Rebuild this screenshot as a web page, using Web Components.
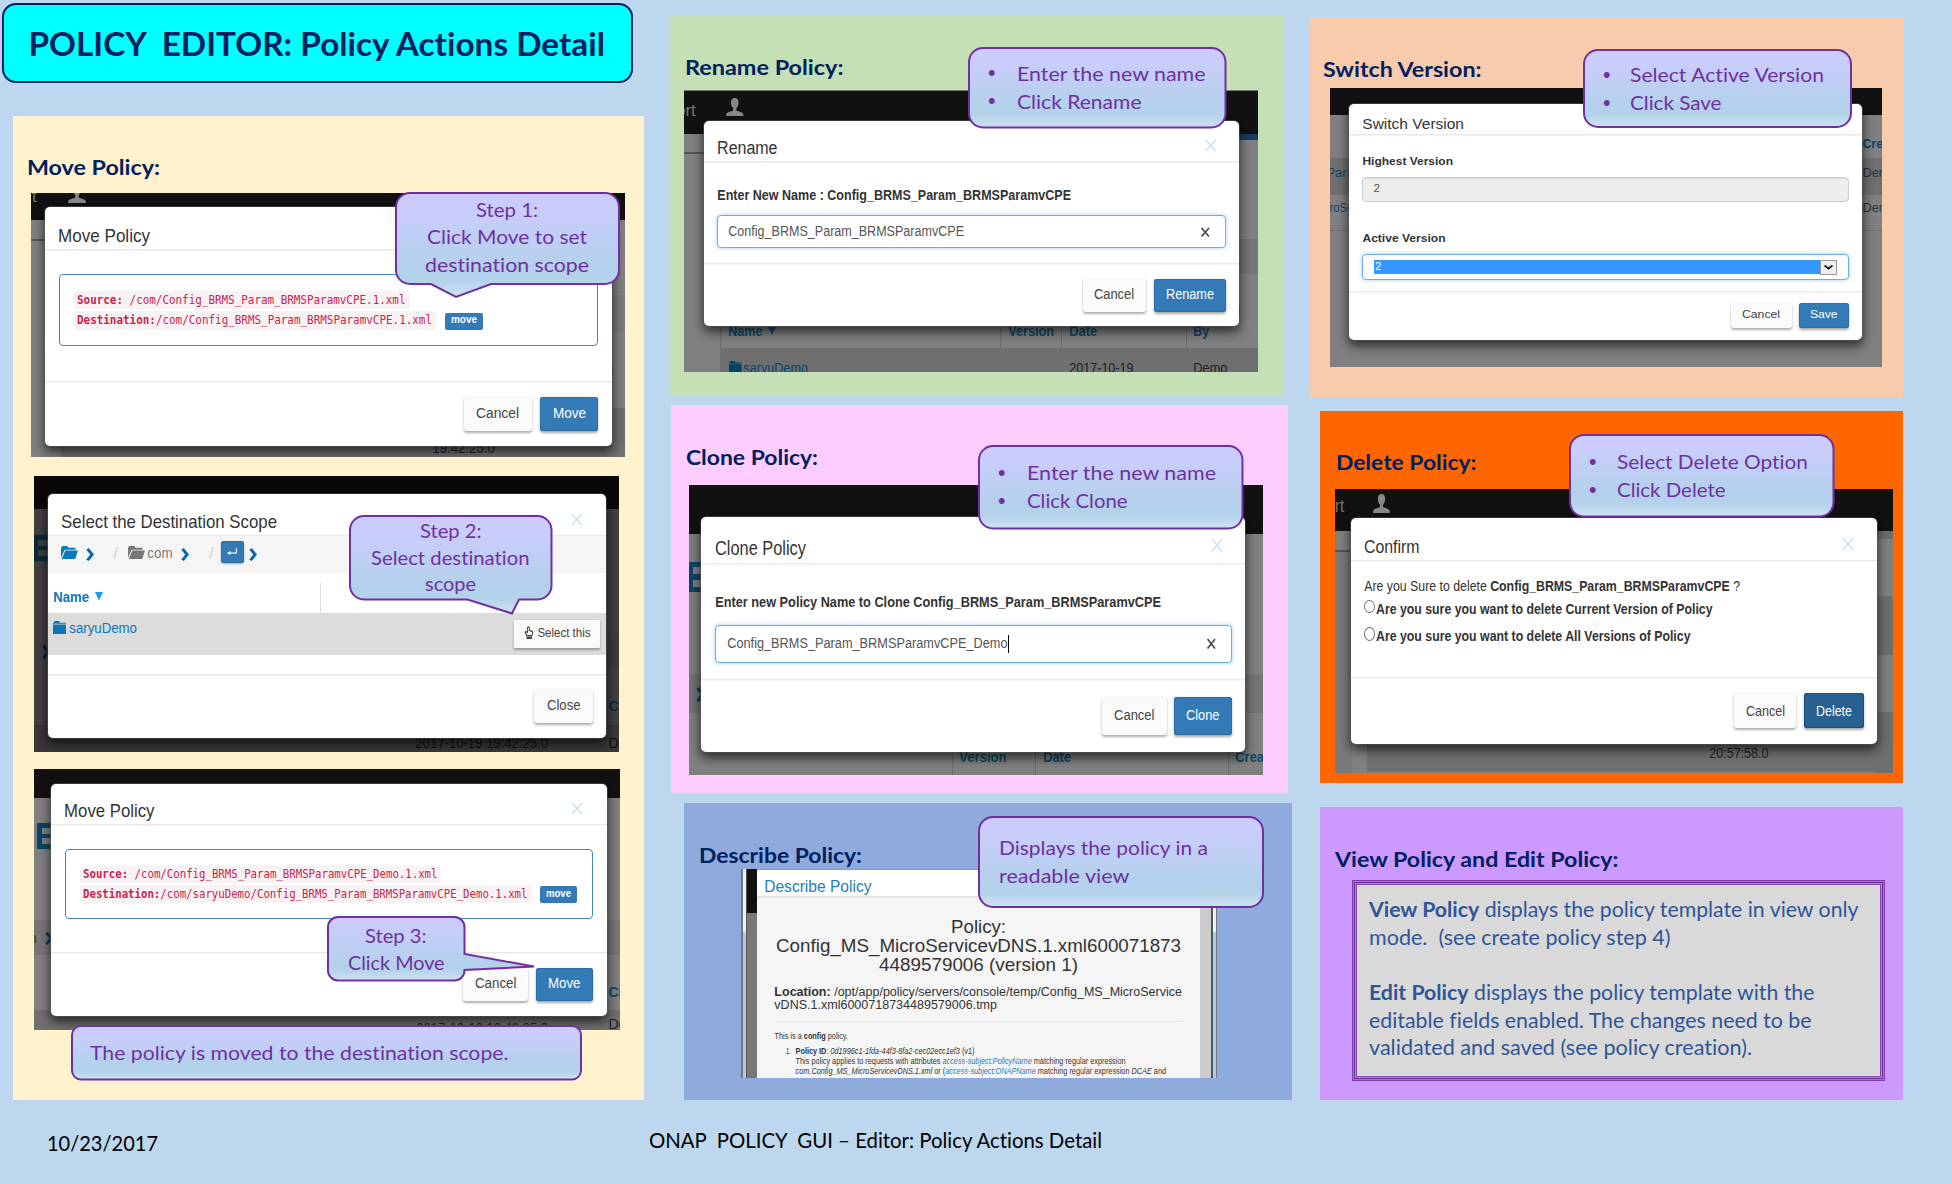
<!DOCTYPE html>
<html lang="en">
<head>
<meta charset="utf-8">
<title>Policy Editor: Policy Actions Detail</title>
<style>
html,body{margin:0;padding:0;background:#bdd7ee;overflow:hidden}
body{width:1952px;height:1184px}
</style>
</head>
<body>
<policy-slide>
  <slide-column style="width:657px">
    <slide-title><fit-text x="26" dy="52" w="575" s="32.5" f="deck"><b>POLICY&nbsp; EDITOR: Policy Actions Detail</b></fit-text></slide-title>
    <policy-panel style="margin:33px 0 0 13px;width:631px;height:984px;--fill:#fff2cc">
      <fit-text slot="heading" x="15" dy="60" w="132" s="21.3" f="deck"><b>Move Policy:</b></fit-text>

      <app-shot box="31,193,594,264" style="margin:17px 0 0 18px">
        <px-rect slot="bg" r="31,193,594,27" c="#111"></px-rect>
        <px-rect slot="bg" r="31,239,32,1.5" c="#555"></px-rect>
        <px-rect slot="bg" r="61,446,564,11" c="#707070"></px-rect>
        <px-rect slot="bg" r="611,295,14,37" c="#7a7a7a"></px-rect>
        <px-rect slot="bg" r="611,408,14,49" c="#707070"></px-rect>
        <px-rect slot="bg" r="611,365,2,10" c="#084a6b"></px-rect>
        <fit-text slot="bg" at="32,202" s="17" style="color:#777">t</fit-text>
        <ui-icon slot="bg" name="user" at="68,185,18,18" style="color:#888"></ui-icon>
        <fit-text slot="bg" at="433,453" w="62" s="14" style="color:#222">19:42:25.0</fit-text>
        <modal-box box="44.5,207,567,239" lines="248.5,381" head="59,243,91,18.5" heading="Move Policy">
          <path-box style="margin:25.5px 0 0 14.5px;width:539px;height:72px">
            <code-line style="width:335.6px;height:18px"><fit-text x="3" dy="14.2" w="328.5" s="12.4" f="mono"><b>Source:</b> /com/Config_BRMS_Param_BRMSParamvCPE.1.xml</fit-text></code-line>
            <code-line slot="dest" style="width:362px;height:19px"><fit-text x="3" dy="14.2" w="355" s="12.4" f="mono"><b>Destination:</b>/com/Config_BRMS_Param_BRMSParamvCPE.1.xml</fit-text></code-line>
            <action-btn slot="dest" kind="tag" style="width:38px;height:17px;margin:2px 0 0 9px"><fit-text dy="11" w="26" s="11.5"><b>move</b></fit-text></action-btn>
          </path-box>
          <action-btn slot="foot" style="width:67.5px;height:34px;margin:16px 0 0"><fit-text dy="21" w="43" s="14">Cancel</fit-text></action-btn>
          <action-btn slot="foot" kind="primary" style="width:58px;height:34px;margin:16px 13.5px 0 8.5px"><fit-text dy="21" w="33" s="14">Move</fit-text></action-btn>
        </modal-box>
      </app-shot>

      <app-shot box="34,476,585,276" style="margin:19px 0 0 21px;background:#404040">
        <px-rect slot="bg" r="34,476,585,33" c="#080808"></px-rect>
        <px-rect slot="bg" r="34,535,14,26" c="#06293b"></px-rect>
        <px-rect slot="bg" r="38,540,10,6" c="#404040"></px-rect>
        <px-rect slot="bg" r="38,550,10,6" c="#404040"></px-rect>
        <px-rect slot="bg" r="34,725,585,27" c="#383838"></px-rect>
        <px-rect slot="bg" r="606,633,13,35" c="#3b3b3b"></px-rect>
        <ui-icon slot="bg" name="chevron" at="42,645,8,14" style="color:#031c35"></ui-icon>
        <fit-text slot="bg" at="416,748" w="132" s="14" style="color:#111">2017-10-19 19:42:25.0</fit-text>
        <fit-text slot="bg" at="608.5,748" s="14" style="color:#111">De</fit-text>
        <fit-text slot="bg" at="608.5,710.5" s="14" style="color:#052d42"><b>Cr</b></fit-text>
        <modal-box box="47.7,494,558.8,244" lines="534.5,673.5" head="62,529,215,18.5" close="571,514,11.5,11" heading="Select the Destination Scope">
          <crumb-bar></crumb-bar>
          <scope-table></scope-table>
          <action-btn slot="foot" style="width:58.5px;height:34.5px;margin:15px 13.5px 0 0"><fit-text dy="21" w="33.5" s="14">Close</fit-text></action-btn>
        </modal-box>
      </app-shot>

      <app-shot box="34,769,586,261" style="margin:17px 0 0 21px">
        <px-rect slot="bg" r="34,769,586,29" c="#111"></px-rect>
        <px-rect slot="bg" r="34,920,586,35" c="#767676"></px-rect>
        <px-rect slot="bg" r="37,823,14,26" c="#0b4666"></px-rect>
        <px-rect slot="bg" r="42,828,9,6" c="#808080"></px-rect>
        <px-rect slot="bg" r="42,838,9,6" c="#808080"></px-rect>
        <px-rect slot="bg" r="34,1010,586,20" c="#707070"></px-rect>
        <fit-text slot="bg" at="29,943" s="14" style="color:#333">n</fit-text>
        <ui-icon slot="bg" name="chevron" at="45,932,8,13" style="color:#063a66"></ui-icon>
        <fit-text slot="bg" at="608.5,997" s="14" style="color:#084a6b"><b>Cre</b></fit-text>
        <fit-text slot="bg" at="608.5,1029" s="14" style="color:#222">De</fit-text>
        <fit-text slot="bg" at="417,1033" w="131" s="14" style="color:#222">2017-10-19 19:42:25.0</fit-text>
        <modal-box box="50.5,783.5,556,232" lines="823.5,952" head="65,818,89.5,18.5" close="571,803,12,11" heading="Move Policy">
          <path-box style="margin:25px 0 0 14px;width:528.5px;height:70px">
            <code-line style="width:361.5px;height:17px"><fit-text x="3.5" dy="12.9" w="354.5" s="12" f="mono"><b>Source:</b> /com/Config_BRMS_Param_BRMSParamvCPE_Demo.1.xml</fit-text></code-line>
            <code-line slot="dest" style="width:452px;height:18.5px"><fit-text x="3.5" dy="13" w="444.5" s="12" f="mono"><b>Destination:</b>/com/saryuDemo/Config_BRMS_Param_BRMSParamvCPE_Demo.1.xml</fit-text></code-line>
            <action-btn slot="dest" kind="tag" style="width:37px;height:17px;margin:1.5px 0 0 8.5px"><fit-text dy="11.5" w="25" s="11.5"><b>move</b></fit-text></action-btn>
          </path-box>
          <action-btn slot="foot" style="width:65.5px;height:33px;margin:16px 0 0"><fit-text dy="20" w="41.5" s="14">Cancel</fit-text></action-btn>
          <action-btn slot="foot" kind="primary" style="width:57px;height:33px;margin:16px 13.5px 0 8px"><fit-text dy="20" w="32.5" s="14">Move</fit-text></action-btn>
        </modal-box>
      </app-shot>
    </policy-panel>
  </slide-column>

  <slide-column style="width:640px;padding:15px 0 0 13px">
    <policy-panel style="width:612.5px;height:381px;--fill:#c5e0b4">
      <fit-text slot="heading" x="15.5" dy="61" w="157.5" s="21.3" f="deck"><b>Rename Policy:</b></fit-text>
      <app-shot box="684,90,574,282" style="margin:14px 0 0 14px">
        <px-rect slot="bg" r="684,90,574,44" c="#111"></px-rect>
        <px-rect slot="bg" r="684,90,574,1" c="#777"></px-rect>
        <px-rect slot="bg" r="684,152,20,1.5" c="#555"></px-rect>
        <px-rect slot="bg" r="1238,134,20,6" c="#173d61"></px-rect>
        <px-rect slot="bg" r="1238,239,20,35" c="#757575"></px-rect>
        <px-rect slot="bg" r="720,348,538,24" c="#6f6f6f"></px-rect>
        <px-rect slot="bg" r="1000,325,1,23" c="#6b6b6b"></px-rect>
        <px-rect slot="bg" r="1061,325,1,23" c="#6b6b6b"></px-rect>
        <px-rect slot="bg" r="1186,325,1,23" c="#6b6b6b"></px-rect>
        <px-rect slot="bg" r="720,325,1,23" c="#6b6b6b"></px-rect>
        <px-rect slot="bg" r="1238,306,2,10" c="#084a6b"></px-rect>
        <fit-text slot="bg" at="677,116" w="18.5" s="16.5" style="color:#777">ort</fit-text>
        <ui-icon slot="bg" name="user" at="725.5,98,17.5,18" style="color:#888"></ui-icon>
        <fit-text slot="bg" at="728.5,335.5" w="33.5" s="14" style="color:#084a6b"><b>Name</b></fit-text>
        <ui-icon slot="bg" name="sort" at="768,327,8,8" style="color:#104a80"></ui-icon>
        <fit-text slot="bg" at="1008.5,335.5" w="45" s="14" style="color:#084a6b"><b>Version</b></fit-text>
        <fit-text slot="bg" at="1069.5,335.5" w="27" s="14" style="color:#084a6b"><b>Date</b></fit-text>
        <fit-text slot="bg" at="1194,335.5" w="15" s="14" style="color:#084a6b"><b>By</b></fit-text>
        <ui-icon slot="bg" name="folder" at="728.5,361,12.5,12" style="color:#034263"></ui-icon>
        <fit-text slot="bg" at="744,372.5" w="64" s="14" style="color:#0b4566">saryuDemo</fit-text>
        <fit-text slot="bg" at="1069.5,372.5" w="63.5" s="14" style="color:#222">2017-10-19</fit-text>
        <fit-text slot="bg" at="1194,372.5" w="33.5" s="14" style="color:#222">Demo</fit-text>
        <modal-box box="703.5,121,535,204.5" lines="161,262.5" head="717.5,154.3,59.5,18" close="1204.5,140,11.5,11" heading="Rename">
          <fit-text x="14" dy="39.5" w="353" s="13.8"><b>Enter New Name : Config_BRMS_Param_BRMSParamvCPE</b></fit-text>
          <text-field style="width:508.5px;height:33px;margin:14.5px 0 0 13.5px"><fit-text x="11" dy="20" w="235" s="14">Config_BRMS_Param_BRMSParamvCPE</fit-text><ui-icon slot="clear" name="close" bold style="width:8.5px;height:8.5px;margin:11.5px 15.5px 0 0;color:#444"></ui-icon></text-field>
          <action-btn slot="foot" style="width:63.5px;height:33px;margin:16px 0 0"><fit-text dy="20" w="40" s="14">Cancel</fit-text></action-btn>
          <action-btn slot="foot" kind="primary" style="width:71.5px;height:33px;margin:16px 13px 0 8px"><fit-text dy="20" w="48" s="14">Rename</fit-text></action-btn>
        </modal-box>
      </app-shot>
    </policy-panel>

    <policy-panel style="margin:9px 0 0 1px;width:617px;height:388px;--fill:#ffccff">
      <fit-text slot="heading" x="16" dy="61" w="131" s="21.3" f="deck"><b>Clone Policy:</b></fit-text>
      <app-shot box="689,485,574,290" style="margin:19px 0 0 18px">
        <px-rect slot="bg" r="689,485,574,48.5" c="#111"></px-rect>
        <px-rect slot="bg" r="689,562,13,30" c="#0b4666"></px-rect>
        <px-rect slot="bg" r="693,567,9,7" c="#808080"></px-rect>
        <px-rect slot="bg" r="693,580,9,7" c="#808080"></px-rect>
        <px-rect slot="bg" r="689,674,574,39" c="#757575"></px-rect>
        <px-rect slot="bg" r="952,752,1,23" c="#6b6b6b"></px-rect>
        <px-rect slot="bg" r="1035,752,1,23" c="#6b6b6b"></px-rect>
        <px-rect slot="bg" r="1228,752,1,23" c="#6b6b6b"></px-rect>
        <ui-icon slot="bg" name="chevron" at="696,687,9,15" style="color:#063a66"></ui-icon>
        <fit-text slot="bg" at="960,762" w="46.5" s="14.5" style="color:#084a6b"><b>Version</b></fit-text>
        <fit-text slot="bg" at="1043.5,762" w="27" s="14.5" style="color:#084a6b"><b>Date</b></fit-text>
        <fit-text slot="bg" at="1236,762" w="28" s="14.5" style="color:#084a6b"><b>Crea</b></fit-text>
        <modal-box box="701,516.5,544,235.5" lines="562.5,679" head="715.5,554.5,90,20" close="1210.5,539,12,12.5" heading="Clone Policy">
          <fit-text x="14.5" dy="45" w="445" s="15.5"><b>Enter new Policy Name to Clone Config_BRMS_Param_BRMSParamvCPE</b></fit-text>
          <text-field style="width:516.5px;height:37.5px;margin:17.5px 0 0 14px"><fit-text x="12" dy="22.3" w="279.5" s="15.5">Config_BRMS_Param_BRMSParamvCPE_Demo</fit-text><text-caret></text-caret><ui-icon slot="clear" name="close" bold style="width:8.5px;height:9.5px;margin:13px 15.5px 0 0;color:#444"></ui-icon></text-field>
          <action-btn slot="foot" style="width:65px;height:37.5px;margin:18px 0 0"><fit-text dy="23.5" w="40.5" s="15.5">Cancel</fit-text></action-btn>
          <action-btn slot="foot" kind="primary" style="width:57.5px;height:37.5px;margin:18px 13.5px 0 7.5px"><fit-text dy="23.5" w="33.5" s="15.5">Clone</fit-text></action-btn>
        </modal-box>
      </app-shot>
    </policy-panel>

    <policy-panel style="margin:10px 0 0 14px;width:608px;height:297px;--fill:#8faadc">
      <fit-text slot="heading" x="15.5" dy="61" w="162" s="21.3" f="deck"><b>Describe Policy:</b></fit-text>
      <app-shot box="741,869,476,208.5" style="margin:5px 0 0 57px;background:linear-gradient(#e6f3fd 62px,#a9cbee 64px)">
        <px-rect slot="bg" r="741,869,1.5,209" c="#777"></px-rect>
        <px-rect slot="bg" r="745.5,869,1,209" c="#555"></px-rect>
        <px-rect slot="bg" r="746.5,869,10,44" c="#111"></px-rect>
        <px-rect slot="bg" r="746.5,913,10,165" c="#777"></px-rect>
        <px-rect slot="bg" r="1199.5,869,12,209" c="#cbcbcb"></px-rect>
        <px-rect slot="bg" r="1211,869,1.5,209" c="#555"></px-rect>
        <px-rect slot="bg" r="1215.5,869,1.5,209" c="#777"></px-rect>
        <describe-doc></describe-doc>
      </app-shot>
    </policy-panel>
  </slide-column>

  <slide-column style="width:594px;padding:17px 0 0 12px">
    <policy-panel style="width:594px;height:381px;--fill:#f8cbad">
      <fit-text slot="heading" x="15" dy="61" w="157.5" s="21.3" f="deck"><b>Switch Version:</b></fit-text>
      <app-shot box="1330,88,552,279" style="margin:10px 0 0 21px">
        <px-rect slot="bg" r="1330,88,552,27" c="#111"></px-rect>
        <px-rect slot="bg" r="1330,158,552,37" c="#6f6f6f"></px-rect>
        <px-rect slot="bg" r="1330,230,552,1" c="#717171"></px-rect>
        <fit-text slot="bg" at="1327,176.5" w="27" s="12" style="color:#0b4566">Para</fit-text>
        <fit-text slot="bg" at="1330,212" w="27" s="12" style="color:#0b4566">roSer</fit-text>
        <fit-text slot="bg" at="1863,148" w="20" s="12" style="color:#084a6b"><b>Cre</b></fit-text>
        <fit-text slot="bg" at="1863,176.5" w="23" s="12" style="color:#333">Den</fit-text>
        <fit-text slot="bg" at="1863,212" w="23" s="12" style="color:#333">Den</fit-text>
        <modal-box box="1349,103.5,512.5,236.5" lines="134,291" head="1362.5,129.9,101,13.8" heading="Switch Version">
          <fit-text x="13.5" dy="32" w="90" s="11.5"><b>Highest Version</b></fit-text>
          <text-field off style="width:486.5px;height:25px;margin:10.5px 0 0 13px"><fit-text x="10.5" dy="15" s="11.5">2</fit-text></text-field>
          <fit-text x="13.5" dy="41.5" w="82.5" s="11.5"><b>Active Version</b></fit-text>
          <text-field style="width:486.5px;height:25.5px;margin:11px 0 0 13px"><version-select></version-select></text-field>
          <action-btn slot="foot" style="width:60.5px;height:25px;margin:12px 0 0"><fit-text dy="16" w="38" s="11.5">Cancel</fit-text></action-btn>
          <action-btn slot="foot" kind="primary" style="width:49.5px;height:25px;margin:12px 13px 0 7.5px"><fit-text dy="16" w="27.5" s="11.5">Save</fit-text></action-btn>
        </modal-box>
      </app-shot>
    </policy-panel>

    <policy-panel style="margin:13px 0 0 11px;width:583px;height:372px;--fill:#ff6600">
      <fit-text slot="heading" x="16.5" dy="60" w="139.5" s="21.3" f="deck"><b>Delete Policy:</b></fit-text>
      <app-shot box="1335,489,558,284" style="margin:18px 0 0 15px">
        <px-rect slot="bg" r="1335,489,558,42" c="#111"></px-rect>
        <px-rect slot="bg" r="1335,550,17,1.5" c="#555"></px-rect>
        <px-rect slot="bg" r="1876,531,17,8" c="#6c6c6c"></px-rect>
        <px-rect slot="bg" r="1335,552,17,221" c="#7a7a7a"></px-rect>
        <px-rect slot="bg" r="1876,596,17,59" c="#6f6f6f"></px-rect>
        <px-rect slot="bg" r="1876,712,17,61" c="#6f6f6f"></px-rect>
        <px-rect slot="bg" r="1367,743,526,29" c="#6f6f6f"></px-rect>
        <fit-text slot="bg" at="1335,513" w="9" s="17.5" style="color:#777">rt</fit-text>
        <ui-icon slot="bg" name="user" at="1373,494,17,19" style="color:#888"></ui-icon>
        <fit-text slot="bg" at="1709.5,757.7" w="58.5" s="15" style="color:#222">20:57:58.0</fit-text>
        <modal-box box="1351,517.5,525.5,226" lines="559.5,677" head="1364.5,553,54.5,19" close="1842,538,12,12" heading="Confirm">
          <fit-text x="13.8" dy="31.2" w="375" s="15">Are you Sure to delete <b>Config_BRMS_Param_BRMSParamvCPE</b> ?</fit-text>
          <radio-row style="margin-top:9.3px"><fit-text dy="14" w="336.5" s="14.8"><b>Are you sure you want to delete Current Version of Policy</b></fit-text></radio-row>
          <radio-row style="margin-top:13.5px"><fit-text dy="14" w="314.5" s="14.8"><b>Are you sure you want to delete All Versions of Policy</b></fit-text></radio-row>
          <action-btn slot="foot" style="width:62px;height:35px;margin:16px 0 0"><fit-text dy="23" w="39" s="15">Cancel</fit-text></action-btn>
          <action-btn slot="foot" kind="primary pressed" style="width:60.5px;height:35px;margin:16px 12.5px 0 7.5px"><fit-text dy="23" w="36" s="15">Delete</fit-text></action-btn>
        </modal-box>
      </app-shot>
    </policy-panel>

    <policy-panel style="margin:24px 0 0 11px;width:583px;height:293px;--fill:#cc99ff">
      <fit-text slot="heading" x="16" dy="61" w="282.5" s="21.3" f="deck"><b>View Policy and Edit Policy:</b></fit-text>
      <info-frame style="margin:12px 0 0 32px;width:533px;height:201px">
        <fit-text x="12.5" dy="32.7" w="488.5" s="20.5" f="deck"><b>View Policy</b> displays the policy template in view only</fit-text>
        <fit-text x="12.5" dy="27.7" w="300.5" s="20.5" f="deck">mode.&nbsp; (see create policy step 4)</fit-text>
        <fit-text x="12.5" dy="55.3" w="444.5" s="20.5" f="deck"><b>Edit Policy</b> displays the policy template with the</fit-text>
        <fit-text x="12.5" dy="27.3" w="441.5" s="20.5" f="deck">editable fields enabled. The changes need to be</fit-text>
        <fit-text x="12.5" dy="27.7" w="382" s="20.5" f="deck">validated and saved (see policy creation).</fit-text>
      </info-frame>
    </policy-panel>
  </slide-column>

  <fit-text slot="footer" x="48" dy="51" w="110" s="20.5" f="deck">10/23/2017</fit-text>
  <fit-text slot="footer" x="492" dy="48" w="452" s="20.5" f="deck">ONAP&nbsp; POLICY&nbsp; GUI – Editor: Policy Actions Detail</fit-text>

  <call-out slot="note" box="395,192,225,93" tail="down,431,491,456,297">
    <fit-text x="82" dy="25.2" w="61" s="20" f="deck">Step 1:</fit-text>
    <fit-text x="33" dy="27.3" w="159" s="20" f="deck">Click Move to set</fit-text>
    <fit-text x="31" dy="27.3" w="163" s="20" f="deck">destination scope</fit-text>
  </call-out>
  <call-out slot="note" box="349,515,203.5,85.5" tail="down,467.5,519,512,613.5">
    <fit-text x="72" dy="23" w="60.5" s="20" f="deck">Step 2:</fit-text>
    <fit-text x="23" dy="26.7" w="157.5" s="20" f="deck">Select destination</fit-text>
    <fit-text x="77" dy="26.5" w="50" s="20" f="deck">scope</fit-text>
  </call-out>
  <call-out slot="note" box="327,916,138.500,65.5" r="10" tail="right,954,970,534,966.5">
    <fit-text x="38.5" dy="27" w="60.5" s="20" f="deck">Step 3:</fit-text>
    <fit-text x="21.5" dy="26.7" w="95.5" s="20" f="deck">Click Move</fit-text>
  </call-out>
  <call-out slot="note" box="71,1025,511,55.5" r="9">
    <fit-text x="19.5" dy="34.5" w="417.5" s="20" f="deck">The policy is moved to the destination scope.</fit-text>
  </call-out>
  <call-out slot="note" box="968,47,258.5,81.5">
    <bullet-row dy="33.5"><fit-text x="22" dy="33.5" w="187.5" s="20" f="deck">Enter the new name</fit-text></bullet-row>
    <bullet-row dy="28"><fit-text x="22" dy="28" w="123.5" s="20" f="deck">Click Rename</fit-text></bullet-row>
  </call-out>
  <call-out slot="note" box="978,445,265.5,84.5">
    <bullet-row dy="35"><fit-text x="22" dy="35" w="188" s="20" f="deck">Enter the new name</fit-text></bullet-row>
    <bullet-row dy="28"><fit-text x="22" dy="28" w="99.5" s="20" f="deck">Click Clone</fit-text></bullet-row>
  </call-out>
  <call-out slot="note" box="978,816,286,92">
    <fit-text x="22" dy="39" w="208" s="20" f="deck">Displays the policy in a</fit-text>
    <fit-text x="22" dy="28" w="129.5" s="20" f="deck">readable view</fit-text>
  </call-out>
  <call-out slot="note" box="1583,48.5,269,79">
    <bullet-row dy="33.5"><fit-text x="20.5" dy="33.5" w="193" s="20" f="deck">Select Active Version</fit-text></bullet-row>
    <bullet-row dy="28"><fit-text x="20.5" dy="28" w="90.5" s="20" f="deck">Click Save</fit-text></bullet-row>
  </call-out>
  <call-out slot="note" box="1569,434,265.5,83.5">
    <bullet-row dy="35"><fit-text x="21" dy="35" w="190" s="20" f="deck">Select Delete Option</fit-text></bullet-row>
    <bullet-row dy="28"><fit-text x="21" dy="28" w="107.5" s="20" f="deck">Click Delete</fit-text></bullet-row>
  </call-out>
</policy-slide>

<script>
const nums = (el, name) => (el.getAttribute(name) || '').split(',').map(Number);
const RESET = '*,:host{box-sizing:border-box}';

// Defines an element from a style sheet, its markup and an optional setup step.
function element(name, css, html, setup) {
  customElements.define(name, class extends HTMLElement {
    connectedCallback() {
      if (this.shadowRoot) return;
      const root = this.attachShadow({ mode: 'open' });
      root.innerHTML = `<style>${RESET}${css}</style>${typeof html === 'function' ? html(this) : html}`;
      if (setup) setup(this, root);
    }
  });
}

element('policy-slide',
  `:host{display:flex;flex-direction:column;position:relative;width:1952px;height:1184px;overflow:hidden;background:#bdd7ee;font-family:"Liberation Sans",sans-serif;font-variant-ligatures:none}
   main{display:flex;height:1100px}
   footer{display:flex;height:84px;color:#000}`,
  `<main><slot></slot></main><footer><slot name="footer"></slot></footer><slot name="note"></slot>`);

element('slide-column', `:host{display:flex;flex-direction:column;flex:none;height:1100px}`, `<slot></slot>`);

element('slide-title',
  `:host{display:block;flex:none;width:631px;height:80px;margin:3px 0 0 2px;background:#0ff;border:2px solid #002060;border-radius:14px;color:#002060}`,
  `<slot></slot>`);

element('policy-panel',
  `:host{display:flex;flex-direction:column;flex:none;background:var(--fill)}
   header{color:#002060;padding-top:.6px;margin-bottom:-.6px;position:relative;z-index:1}`,
  `<header><slot name="heading"></slot></header><slot></slot>`);

element('info-frame',
  `:host{display:block;background:#d9d9d9;color:#2f5597;border:1px solid #7b3fae;box-shadow:inset 0 0 0 1px #a76fd6,inset 0 0 0 2px #7030a0,inset 0 0 0 3px #b07fd0,inset 0 0 0 4px #8648b5;padding:4px}`,
  `<slot></slot>`);

// A captured application window; its backdrop layer shares the slide's coordinates.
element('app-shot',
  `:host{display:block;flex:none;position:relative;overflow:hidden;background:#808080}
   .bg{position:absolute;width:0;height:0;z-index:0}
   .fg{position:relative;z-index:1;display:flow-root}`,
  `<div class="bg"><slot name="bg"></slot></div><div class="fg"><slot></slot></div>`,
  (el, root) => {
    const [x, y, w, h] = nums(el, 'box');
    el.style.width = w + 'px'; el.style.height = h + 'px';
    const bg = root.querySelector('.bg');
    bg.style.left = -x + 'px'; bg.style.top = -y + 'px';
  });

element('px-rect', `:host{display:block;position:absolute}`, '', el => {
  const [x, y, w, h] = nums(el, 'r');
  el.style.cssText += `;left:${x}px;top:${y}px;width:${w}px;height:${h}px;background:${el.getAttribute('c')}`;
});

const ICONS = {
  user: '<path fill="currentColor" d="M8 0C5.4 0 4.4 2 4.6 4.6 4.8 6.8 5.6 8 6.5 8.8V11C4.5 12 1 12.4.3 14L0 16H16L15.7 14C15 12.4 11.5 12 9.5 11V8.8C10.4 8 11.2 6.8 11.4 4.6 11.6 2 10.6 0 8 0Z"/>',
  open: '<path fill="currentColor" d="M0 14.5V2L1.5 0H6L7 2.2H13.6V4.6H3.4Z"/><path fill="currentColor" d="M4 5.6H16L13.4 16H.7Z"/>',
  folder: '<path fill="currentColor" d="M0 3.5V2H1L2 0H7.5L8.5 2H16V3.5Z M0 4.3H16V16H0Z"/>',
  chevron: '<path fill="currentColor" d="M.5 2L5.5 0 16 8 5.5 16 .5 14 8.5 8Z"/>',
  sort: '<path fill="currentColor" d="M0 0H16L8 16Z"/>',
  enter: '<path fill="none" stroke="currentColor" stroke-width="1.7" d="M15 2V10.500H4"/><path fill="currentColor" d="M5.500 7V14L0 10.500Z"/>',
  hand: '<path fill="none" stroke="currentColor" stroke-width="1.6" d="M5.5 8V2.200Q5.500 1 7 1T8.500 2.200V5.500L13 6.500Q14 7 14 8.500L12.500 12H4.500L2 8.500Q2 6.500 3.500 7Z"/><path fill="currentColor" d="M4 13.300H13V16H4Z"/>',
  down: '<path fill="none" stroke="currentColor" stroke-width="4" d="M1 4L8 12 15 4"/>'
};
element('ui-icon', `:host{display:block;flex:none}svg{display:block;width:100%;height:100%;overflow:visible}`,
  el => {
    const n = el.getAttribute('name');
    const body = n === 'close'
      ? `<path fill="none" stroke="currentColor" stroke-width="${el.hasAttribute('bold') ? 3 : 2.2}" d="M1 0L15 16M15 0L1 16"/>` : ICONS[n];
    return `<svg viewBox="0 0 16 16" preserveAspectRatio="none" aria-hidden="true">${body}</svg>`;
  },
  el => {
    if (!el.hasAttribute('at')) return;
    const [x, y, w, h] = nums(el, 'at');
    Object.assign(el.style, { position: 'absolute', left: x + 'px', top: y + 'px', width: w + 'px', height: h + 'px' });
  });

element('modal-box',
  `:host{display:flex;flex-direction:column;background:#fff;border-radius:5px;overflow:visible;color:#333;box-shadow:0 0 0 1px rgba(90,90,90,.5),0 5px 11px 1px rgba(0,0,0,.65)}
   header{display:flex;flex:none;align-items:flex-start;justify-content:space-between;box-shadow:0 1.5px #e9e9e9}
   section{flex:none;padding-top:.01px}
   footer{display:flex;flex:1;justify-content:flex-end;align-items:flex-start;box-shadow:inset 0 1.5px #e9e9e9}
   ui-icon{color:#cfe2f1}`,
  el => {
    const [x, y, w] = nums(el, 'box'), [hx, hb, hw, hs] = nums(el, 'head');
    let close = '';
    if (el.hasAttribute('close')) {
      const [cx, cy, cw, ch] = nums(el, 'close');
      close = `<ui-icon name="close" style="width:${cw}px;height:${ch}px;margin:${cy - y}px ${x + w - cx - cw}px 0 0"></ui-icon>`;
    }
    return `<header><fit-text x="${hx - x}" dy="${hb - y}" w="${hw}" s="${hs}">${el.getAttribute('heading')}</fit-text>${close}</header>
      <section><slot></slot></section><footer><slot name="foot"></slot></footer>`;
  },
  (el, root) => {
    const [x, y, w, h] = nums(el, 'box'), [hl, fl] = nums(el, 'lines');
    const [px, py] = nums(el.parentElement, 'box');
    el.style.cssText += `;margin:${y - py}px 0 0 ${x - px}px;width:${w}px;height:${h}px`;
    root.querySelector('header').style.height = hl - y + 'px';
    root.querySelector('section').style.height = fl - hl + 'px';
  });

element('action-btn',
  `:host{display:flex;flex:none;justify-content:center;border-radius:3px;background:#fafafa;color:#444;box-shadow:0 1.5px 2.5px rgba(0,0,0,.32)}
   :host([kind~=primary]){background:#337ab7;border:0;color:#fff;box-shadow:inset 0 0 0 1px #2e6da4,0 1.5px 2.5px rgba(0,0,0,.35)}
   :host([kind~=pressed]){background:#286090;box-shadow:inset 0 0 0 1px #204d74,0 1.5px 2.5px rgba(0,0,0,.35)}
   :host([kind=tag]){background:#337ab7;color:#fff;border-radius:2px;box-shadow:none}`,
  `<slot></slot>`);

element('path-box',
  `:host{display:flex;flex-direction:column;gap:2px;border:1px solid #3f86c0;border-radius:4px;padding:16px 0 0 14px;color:#c7254e}
   div{display:flex;align-items:flex-start}`,
  `<slot></slot><div><slot name="dest"></slot></div>`);
element('code-line', `:host{display:block;flex:none;background:#f9f2f4;border-radius:3px}`, `<slot></slot>`);

element('text-field',
  `:host{display:flex;align-items:flex-start;border:1px solid #66afe9;border-radius:4px;background:#fff;color:#555;box-shadow:0 0 4px rgba(102,175,233,.6)}
   :host([off]){background:#eee;border-color:#ccc;box-shadow:inset 0 1px 1px rgba(0,0,0,.08)}
   span{flex:1}`,
  `<slot></slot><span></span><slot name="clear"></slot>`);
element('text-caret', `:host{display:block;width:1px;height:17.5px;margin-top:9px;background:#000}`, '');

element('version-select',
  `:host{display:flex;margin:4.5px 0 0 11px;height:15px}
   .v{width:446px;height:14px;background:#39f;color:#fff}
   .b{display:flex;align-items:center;justify-content:center;width:17px;height:15px;background:#eee;border:1px solid #999;color:#111}`,
  `<div class="v"><fit-text x="1" dy="11" s="11.5">2</fit-text></div><div class="b"><ui-icon name="down" style="width:9px;height:6px"></ui-icon></div>`);

element('radio-row',
  `:host{display:flex;align-items:flex-start;height:14px;padding-left:13px}
   i{flex:none;width:11px;height:13.5px;border:1px solid #777;border-radius:50%;background:#fff;margin-right:.5px}`,
  `<i></i><slot></slot>`);

element('crumb-bar',
  `:host{display:flex;align-items:flex-start;height:37.5px;margin-top:1px;background:#f5f5f5;color:#0568ae}
   .e{display:flex;align-items:center;justify-content:center;width:23px;height:22.5px;background:#337ab7;border-radius:3px;color:#fff;box-shadow:inset 0 0 0 1px #2e6da4,0 1px 2px rgba(0,0,0,.3);margin:5px 0 0 7.5px}`,
  `<ui-icon name="open" style="width:17px;height:13px;margin:10.5px 0 0 13.5px;color:#0a78b8"></ui-icon>
   <ui-icon name="chevron" style="width:8px;height:13px;margin:12px 0 0 7.5px"></ui-icon>
   <fit-text x="20" dy="22" s="14" style="color:#ccc">/</fit-text>
   <ui-icon name="open" style="width:17px;height:13px;margin:10.5px 0 0 10.8px;color:#777"></ui-icon>
   <fit-text x="2.5" dy="22.5" w="24.5" s="14" style="color:#777">com</fit-text>
   <ui-icon name="chevron" style="width:8px;height:13px;margin:12px 0 0 9px"></ui-icon>
   <fit-text x="20" dy="22" s="14" style="color:#ccc">/</fit-text>
   <div class="e"><ui-icon name="enter" style="width:10px;height:9px"></ui-icon></div>
   <ui-icon name="chevron" style="width:8px;height:13px;margin:12px 0 0 5.5px"></ui-icon>`);

element('scope-table',
  `:host{display:block;color:#0d76b6}
   .h{display:flex;align-items:flex-start;height:39.5px}
   .n{display:flex;width:273.8px;height:30px;margin-top:9.5px;border-right:1px solid #ddd}
   .r{display:flex;align-items:flex-start;height:42px;background:#dcdcdc}
   .r span{flex:1}`,
  `<div class="h"><div class="n"><fit-text x="6" dy="19" w="35" s="14"><b>Name</b></fit-text><ui-icon name="sort" style="width:8px;height:8.5px;margin:9.5px 0 0 6px;color:#2196f3"></ui-icon></div></div>
   <div class="r"><ui-icon name="folder" style="width:13px;height:13px;margin:8.5px 0 0 5.5px"></ui-icon>
     <fit-text x="3.5" dy="20.3" w="67" s="14">saryuDemo</fit-text><span></span>
     <action-btn style="width:86px;height:28px;margin:7px 6.5px 0 0;justify-content:flex-start;border-radius:1px"><ui-icon name="hand" style="width:10px;height:13px;margin:6.5px 0 0 10px"></ui-icon><fit-text x="4" dy="17.5" w="52.5" s="12.3">Select this</fit-text></action-btn></div>`);

element('describe-doc',
  `:host{display:flex;flex-direction:column;margin-left:15.5px;width:443px;height:208.5px;background:#f5f5f5;border-top:1px solid #999;color:#333}
   header{flex:none;height:28px;background:#fff;border-bottom:2px solid #e4e4e4;color:#1b7fba}
   hr{flex:none;width:408px;height:1px;margin:11px 0 0 18.5px;border:0;background:#e8e8e8}
   .item{display:flex;align-items:flex-start}
   a{color:#1b7fba;font-style:italic}
   i{font-style:italic}`,
  `<header><fit-text x="8" dy="22.3" w="106.5" s="15.8">Describe Policy</fit-text></header>
   <fit-text x="195.5" dy="35.5" w="54" s="18.7">Policy:</fit-text>
   <fit-text x="20.5" dy="19" w="404" s="18.7">Config_MS_MicroServicevDNS.1.xml600071873</fit-text>
   <fit-text x="123.5" dy="19.5" w="198" s="18.7">4489579006 (version 1)</fit-text>
   <fit-text x="18.5" dy="25.3" w="407" s="12.7"><b>Location:</b> /opt/app/policy/servers/console/temp/Config_MS_MicroService</fit-text>
   <fit-text x="18.5" dy="13" w="222" s="12.7">vDNS.1.xml6000718734489579006.tmp</fit-text>
   <hr>
   <fit-text x="18.5" dy="17.4" w="73" s="8.8">This is a <b>config</b> policy.</fit-text>
   <div class="item"><fit-text x="29.5" dy="14.5" w="5" s="8.8">1.</fit-text><fit-text x="5" dy="14.5" w="178.5" s="8.8"><b>Policy ID</b>: <i>0d1996c1-1fda-44f3-8fa2-cec02ecc1ef3</i> (v1)</fit-text></div>
   <fit-text x="39.5" dy="10" w="329.5" s="8.8">This policy applies to requests with attributes <a>access-subject:PolicyName</a> matching regular expression</fit-text>
   <fit-text x="39.5" dy="9.8" w="370" s="8.8"><i>com.Config_MS_MicroServicevDNS.1.xml</i> or (<a>access-subject:ONAPName</a> matching regular expression <i>DCAE</i> and</fit-text>`);

let noteId = 0;
// Rounded annotation bubble, with an optional pointer on its lower or right edge.
element('call-out',
  `:host{display:block;position:absolute;z-index:5;color:#7030a0}
   svg{position:absolute;left:0;top:0;overflow:visible;z-index:-1}`,
  el => {
    const [x, y, w, h] = nums(el, 'box'), r = +(el.getAttribute('r') || 14);
    const t = (el.getAttribute('tail') || '').split(',');
    const [a, b, tx, ty] = t.slice(1).map(Number);
    const L = 1, T = 1, R = w - 1, B = h - 1, id = 'g' + noteId++;
    const right = t[0] === 'right' ? `L${R} ${a - y}L${tx - x} ${ty - y}L${R} ${b - y}` : '';
    const down = t[0] === 'down' ? `L${b - x} ${B}L${tx - x} ${ty - y}L${a - x} ${B}` : '';
    const d = `M${L + r} ${T}H${R - r}A${r} ${r} 0 0 1 ${R} ${T + r}${right}V${B - r}A${r} ${r} 0 0 1 ${R - r} ${B}${down}H${L + r}A${r} ${r} 0 0 1 ${L} ${B - r}V${T + r}A${r} ${r} 0 0 1 ${L + r} ${T}Z`;
    return `<svg width="${w}" height="${h}"><defs><linearGradient id="${id}" x1="0" y1="0" x2="0" y2="1"><stop offset="0" stop-color="#ccccff"/><stop offset=".17" stop-color="#c9cdfb"/><stop offset=".74" stop-color="#b2d1eb"/><stop offset=".84" stop-color="#b4d2ea"/><stop offset="1" stop-color="#cfe1f3"/></linearGradient></defs><path d="${d}" fill="url(#${id})" stroke="#7030a0" stroke-width="2"/></svg><slot></slot>`;
  },
  el => {
    const [x, y, w, h] = nums(el, 'box');
    el.style.cssText += `;left:${x}px;top:${y}px;width:${w}px;height:${h}px`;
  });

element('bullet-row', `:host{display:flex;align-items:flex-start;padding-left:20px}`,
  el => `<fit-text dy="${el.getAttribute('dy')}" s="22" w="7.5">•</fit-text><slot></slot>`);

const FONTS = { deck: 'Lato, sans-serif', mono: '"DejaVu Sans Mono", monospace', sans: '"Liberation Sans", sans-serif' };
const pen = document.createElement('canvas').getContext('2d');

// One line of text: s is the font size, w the width its ink fills, dy the height above its baseline.
element('fit-text',
  `:host{display:flex;flex:none;align-items:flex-end;white-space:nowrap}
   span{display:block;flex:none;transform-origin:0 50%}`,
  el => `<span><slot></slot></span>`,
  (el, root) => {
    const s = +el.getAttribute('s'), face = el.getAttribute('f') || 'sans', font = FONTS[face];
    const dy = +(el.getAttribute('dy') || Math.ceil(s));
    pen.font = `100px ${font}`;
    const m = pen.measureText('H');
    const A = Math.round(m.fontBoundingBoxAscent * s / 100), D = Math.round(m.fontBoundingBoxDescent * s / 100);
    const gap = s - ((s - (A + D)) / 2 + A);
    const span = root.querySelector('span');
    span.style.cssText = `font-family:${font};font-size:${s}px;line-height:${s}px;margin-bottom:${-gap}px`;
    el.style.height = dy + 'px';
    if (el.hasAttribute('x')) el.style.marginLeft = el.getAttribute('x') + 'px';
    if (el.hasAttribute('at')) {
      const [x, y] = nums(el, 'at');
      Object.assign(el.style, { position: 'absolute', left: x + 'px', top: y - dy + 'px' });
    }
    if (el.hasAttribute('w')) {
      const w = +el.getAttribute('w'), natural = span.getBoundingClientRect().width;
      const placed = el.hasAttribute('x') || el.hasAttribute('at');
      const bearing = placed && face !== 'mono' && w > 12 ? s * .05 : 0;
      el.style.width = w + 'px';
      if (natural) span.style.transform = `translateX(${-bearing}px) scaleX(${(w + bearing) / natural})`;
    }
  });
</script>
</body>
</html>
